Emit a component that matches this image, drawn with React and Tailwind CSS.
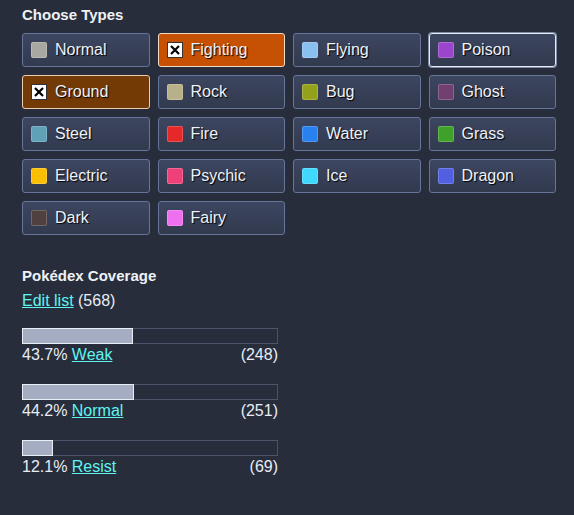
import React from 'react';

const types = [
  { name: 'Normal', color: '#a8a8a0' },
  { name: 'Fighting', color: '#c03028', checked: 'fighting' },
  { name: 'Flying', color: '#89c0f0' },
  { name: 'Poison', color: '#9b45cc', focus: true },
  { name: 'Ground', color: '#e0c068', checked: 'ground' },
  { name: 'Rock', color: '#b8b088' },
  { name: 'Bug', color: '#94a11b' },
  { name: 'Ghost', color: '#704170' },
  { name: 'Steel', color: '#60a1b8' },
  { name: 'Fire', color: '#e62829' },
  { name: 'Water', color: '#2980ef' },
  { name: 'Grass', color: '#3fa129' },
  { name: 'Electric', color: '#fac000' },
  { name: 'Psychic', color: '#ef4179' },
  { name: 'Ice', color: '#3fd8ff' },
  { name: 'Dragon', color: '#5060e1' },
  { name: 'Dark', color: '#50413f' },
  { name: 'Fairy', color: '#ef70ef' },
];

const coverage = [
  { pct: 43.7, label: 'Weak', count: 248 },
  { pct: 44.2, label: 'Normal', count: 251 },
  { pct: 12.1, label: 'Resist', count: 69 },
];

const TypeButton = ({ t }) => {
  let cls = 'border-[#67759a] bg-gradient-to-b from-[#3d4660] to-[#323a4f]';
  if (t.checked === 'fighting') cls = 'border-[#f3d9c8] bg-[#c65102]';
  if (t.checked === 'ground') cls = 'border-[#e8cdb0] bg-[#733a06]';
  if (t.focus) cls = 'border-[#e6ecf5] ring-1 ring-[#7f8ba8] bg-gradient-to-b from-[#3d4660] to-[#323a4f]';
  return (
    <button className={`h-[34px] flex items-center gap-[8px] pl-[8px] rounded-[3px] border text-left ${cls}`}>
      {t.checked ? (
        <span className="w-[16px] h-[16px] bg-white border border-[#333] flex items-center justify-center">
          <svg width="10" height="10" viewBox="0 0 10 10">
            <path d="M1 1L9 9M9 1L1 9" stroke="#000" strokeWidth="2.2" />
          </svg>
        </span>
      ) : (
        <span
          className="w-[16px] h-[16px] rounded-[2px] border border-white/20"
          style={{ backgroundColor: t.color }}
        />
      )}
      <span className="text-[16px] text-[#eef2fa] [text-shadow:1px_1px_1px_#000]">{t.name}</span>
    </button>
  );
};

export default function App() {
  return (
    <div className="w-[574px] h-[515px] bg-[#272d3b] px-[22px] pt-[6px] font-['Liberation_Sans',Arial,sans-serif] text-[#e8ecf4]">
      <h2 className="text-[15px] font-bold leading-[18px] text-[#eef1f6]">Choose Types</h2>
      <div className="grid grid-cols-4 gap-x-[8px] gap-y-[8px] mt-[9px] w-[534px]">
        {types.map((t) => (
          <TypeButton key={t.name} t={t} />
        ))}
      </div>

      <h3 className="text-[15px] font-bold leading-[18px] mt-[32px] text-[#eef1f6]">Pokédex Coverage</h3>
      <div className="text-[16px] leading-[18px] mt-[7px]">
        <a href="#" className="text-[#5ff5f0] underline">Edit list</a> (568)
      </div>

      <div className="mt-[18px] w-[256px] flex flex-col gap-[19px]">
        {coverage.map((c) => (
          <div key={c.label}>
            <div className="h-[16px] border border-[#4b5569] relative">
              <div
                className="absolute -left-px -top-px -bottom-px bg-[#a4adc2] border border-[#e8ecf4]"
                style={{ width: `${c.pct}%` }}
              />
            </div>
            <div className="flex justify-between text-[16px] leading-[20px] mt-[1px]">
              <span>
                {c.pct}% <a href="#" className="text-[#5ff5f0] underline">{c.label}</a>
              </span>
              <span>({c.count})</span>
            </div>
          </div>
        ))}
      </div>
    </div>
  );
}
